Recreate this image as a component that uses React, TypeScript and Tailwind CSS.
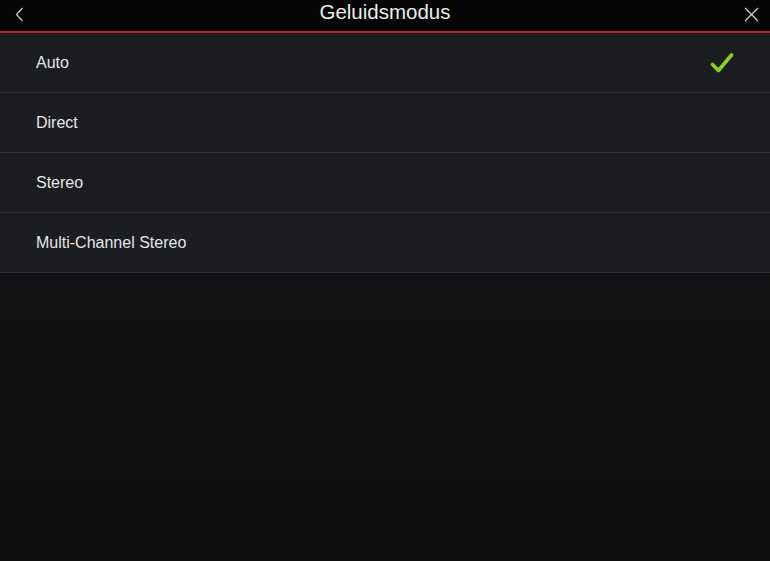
const modes = ["Auto", "Direct", "Stereo", "Multi-Channel Stereo"];

export default function App() {
  const selected = "Auto";

  return (
    <div
      className="flex h-[561px] w-[770px] flex-col overflow-hidden bg-gradient-to-b from-[#151518] to-[#0e0e10] text-[#e6e6e8]"
      style={{ fontFamily: '"Liberation Sans", Arial, sans-serif' }}
    >
      <header className="flex h-[33px] items-center justify-between border-b-2 border-[#b3272d] bg-[#050506] pl-[12px] pr-[10px]">
        <button className="mb-[3px] flex h-[24px] w-[14px] items-center justify-center text-[#d0d0d2]">
          <svg width="9" height="15" viewBox="0 0 9 15" fill="none">
            <path d="M7.5 1 L1.5 7.5 L7.5 14" stroke="currentColor" strokeWidth="1.2" />
          </svg>
        </button>
        <h1 className="mb-[6px] text-[20.5px] leading-none text-[#ececee]">Geluidsmodus</h1>
        <button className="mb-[2px] flex h-[24px] w-[16px] items-center justify-center text-[#d0d0d2]">
          <svg width="15" height="15" viewBox="0 0 15 15" fill="none">
            <path d="M1 1 L14 14 M14 1 L1 14" stroke="currentColor" strokeWidth="1.2" />
          </svg>
        </button>
      </header>

      <ul className="bg-[#1c1d21]">
        {modes.map((mode) => (
          <li
            key={mode}
            className="flex h-[60px] items-center justify-between border-b border-[#303135] pl-[36px] pr-[36px]"
          >
            <span className="text-[16px]">{mode}</span>
            {mode === selected && (
              <svg width="24" height="22" viewBox="0 0 24 22" fill="none">
                <path
                  d="M2.5 12.5 L8.5 18.5 L21.5 3"
                  stroke="#86d11d"
                  strokeWidth="3.6"
                  strokeLinecap="round"
                  strokeLinejoin="round"
                />
              </svg>
            )}
          </li>
        ))}
      </ul>
    </div>
  );
}
